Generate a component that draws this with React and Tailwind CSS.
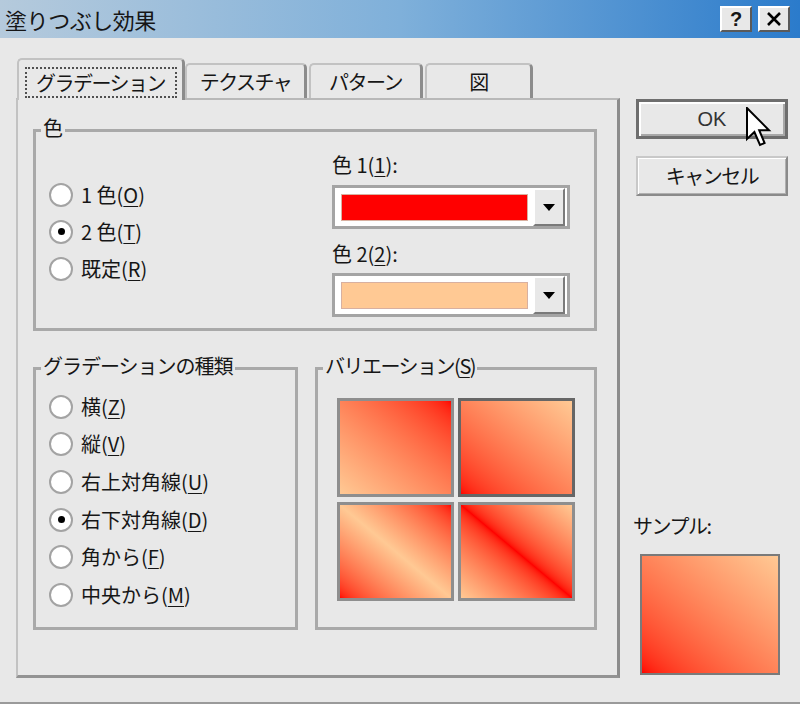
import React from "react";

function U({ children }) {
  return <span className="underline underline-offset-[3px] decoration-1">{children}</span>;
}

function Radio({ checked, children, rowClass }) {
  return (
    <div className={"flex items-center " + rowClass}>
      <span className="w-[24px] h-[24px] rounded-full bg-white border-2 border-[#a3a3a3] flex items-center justify-center shrink-0">
        {checked && <span className="w-[7px] h-[7px] rounded-full bg-black" />}
      </span>
      <span className="ml-[8px] whitespace-nowrap">{children}</span>
    </div>
  );
}

function Dropdown({ swatch }) {
  return (
    <div className="w-[238px] h-[44px] border-[3px] border-[#a4a4a4] bg-white flex items-center pl-[6px] pr-[2px]">
      <div className={"w-[187px] h-[27px] border border-[#d8b0a0] " + swatch} />
      <div className="ml-auto w-[32px] h-[38px] bg-[#e8e8e8] border-2 border-t-white border-l-white border-r-[#7a7a7a] border-b-[#7a7a7a] flex items-center justify-center">
        <svg width="12" height="7" viewBox="0 0 12 7">
          <path d="M0 0 L12 0 L6 7 Z" fill="#000" />
        </svg>
      </div>
    </div>
  );
}

export default function App() {
  return (
    <div className="relative w-[800px] h-[704px] bg-[#e8e8e8] flex flex-col overflow-hidden font-['Noto_Sans_CJK_JP',sans-serif] text-[20px] text-[#161616] leading-none border-b-2 border-[#9a9a9a]">
      {/* Title bar */}
      <div className="h-[38px] shrink-0 flex items-center pl-[5px] pr-[10px] bg-linear-to-r/srgb from-[#b5cadc] via-[#7fb0da] to-[#2b7bcb]">
        <span className="text-[22px] tracking-[-0.5px]">塗りつぶし効果</span>
        <div className="ml-auto flex gap-[6px]">
          <div className="w-[32px] h-[26px] bg-[#e8e8e8] border-2 border-t-white border-l-white border-r-[#5a5a5a] border-b-[#5a5a5a] flex items-center justify-center font-bold text-[20px] font-['Liberation_Sans',sans-serif]">
            ?
          </div>
          <div className="w-[32px] h-[26px] bg-[#e8e8e8] border-2 border-t-white border-l-white border-r-[#5a5a5a] border-b-[#5a5a5a] flex items-center justify-center">
            <svg width="16" height="14" viewBox="0 0 16 14">
              <path d="M2 1 L14 13 M14 1 L2 13" stroke="#000" strokeWidth="2.6" />
            </svg>
          </div>
        </div>
      </div>

      {/* Body */}
      <div className="flex-1 flex pl-[16px] pt-[20px]">
        {/* Left: tab control */}
        <div className="w-[604px] flex flex-col">
          <div className="h-[40px] flex items-end pl-[1px] tracking-[-1.5px]">
            <div className="relative z-10 w-[168px] h-[42px] -mb-[2px] bg-[#e8e8e8] border-l-2 border-t-2 border-r-[3px] border-l-[#c2c2c2] border-t-[#c2c2c2] border-r-[#8c8c8c] rounded-t-[5px] flex justify-center pt-[7px]">
              <div className="w-[152px] h-[31px] border-2 border-dotted border-[#505050] flex items-center justify-center">
                グラデーション
              </div>
            </div>
            <div className="w-[122px] h-[35px] border-l-2 border-t-2 border-r-[3px] border-l-[#c2c2c2] border-t-[#c2c2c2] border-r-[#8c8c8c] rounded-t-[5px] flex items-center justify-center">
              テクスチャ
            </div>
            <div className="ml-[2px] w-[114px] h-[35px] border-l-2 border-t-2 border-r-[3px] border-l-[#c2c2c2] border-t-[#c2c2c2] border-r-[#8c8c8c] rounded-t-[5px] flex items-center justify-center">
              パターン
            </div>
            <div className="ml-[2px] w-[108px] h-[35px] border-l-2 border-t-2 border-r-[3px] border-l-[#c2c2c2] border-t-[#c2c2c2] border-r-[#8c8c8c] rounded-t-[5px] flex items-center justify-center">
              図
            </div>
          </div>

          <div className="w-[604px] h-[580px] border-t-2 border-l-2 border-t-[#b8b8b8] border-l-[#c2c2c2] border-r-[3px] border-b-[3px] border-r-[#8c8c8c] border-b-[#939393] pl-[15px] pt-[16px]">
            {/* Colour group */}
            <fieldset className="w-[564px] h-[215px] border-[3px] border-[#a9a9a9]">
              <legend className="ml-[5px] px-[2px] h-[28px] leading-[24px]">色</legend>
              <div className="flex">
                <div className="w-[296px] pl-[13px] pt-[32px]">
                  <Radio rowClass="h-[37px]">
                    1 色(<U>O</U>)
                  </Radio>
                  <Radio rowClass="h-[37px]" checked>
                    2 色(<U>T</U>)
                  </Radio>
                  <Radio rowClass="h-[37px]">
                    既定(<U>R</U>)
                  </Radio>
                </div>
                <div className="flex flex-col pt-[9px]">
                  <div className="h-[24px] leading-[24px]">
                    色 1(<U>1</U>):
                  </div>
                  <div className="mt-[8px]">
                    <Dropdown swatch="bg-[#ff0000]" />
                  </div>
                  <div className="mt-[13px] h-[24px] leading-[24px]">
                    色 2(<U>2</U>):
                  </div>
                  <div className="mt-[7px]">
                    <Dropdown swatch="bg-[#ffc994]" />
                  </div>
                </div>
              </div>
            </fieldset>

            <div className="flex gap-[17px] mt-[23px]">
              {/* Gradient type */}
              <fieldset className="w-[265px] h-[276px] border-[3px] border-[#a9a9a9]">
                <legend className="ml-[5px] px-[2px] h-[28px] leading-[24px] tracking-[-1px]">グラデーションの種類</legend>
                <div className="pl-[13px] pt-[6px]">
                  <Radio rowClass="h-[37.6px]">
                    横(<U>Z</U>)
                  </Radio>
                  <Radio rowClass="h-[37.6px]">
                    縦(<U>V</U>)
                  </Radio>
                  <Radio rowClass="h-[37.6px]">
                    右上対角線(<U>U</U>)
                  </Radio>
                  <Radio rowClass="h-[37.6px]" checked>
                    右下対角線(<U>D</U>)
                  </Radio>
                  <Radio rowClass="h-[37.6px]">
                    角から(<U>F</U>)
                  </Radio>
                  <Radio rowClass="h-[37.6px]">
                    中央から(<U>M</U>)
                  </Radio>
                </div>
              </fieldset>

              {/* Variations */}
              <fieldset className="w-[282px] h-[276px] border-[3px] border-[#a9a9a9]">
                <legend className="ml-[5px] px-[2px] h-[28px] leading-[24px] tracking-[-1.5px]">
                  バリエーション(<U>S</U>)
                </legend>
                <div className="pl-[19px] pt-[16px]">
                  <div className="grid grid-cols-[117px_117px] grid-rows-[99px_99px] gap-x-[4px] gap-y-[5px]">
                    <div className="border-[3px] border-[#8e8e8e] bg-linear-to-tr from-[#ffc994] to-[#ff0000]" />
                    <div className="border-[3px] border-[#666666] bg-linear-to-tr from-[#ff0000] to-[#ffc994]" />
                    <div className="border-[3px] border-[#8e8e8e] bg-linear-to-tr from-[#ff0000] via-[#ffc994] to-[#ff0000]" />
                    <div className="border-[3px] border-[#8e8e8e] bg-linear-to-tr from-[#ffc994] via-[#ff0000] to-[#ffc994]" />
                  </div>
                </div>
              </fieldset>
            </div>
          </div>
        </div>

        {/* Right column */}
        <div className="ml-[16px] w-[152px] flex flex-col pt-[41px]">
          <div className="h-[40px] border-[3px] border-[#6e6e6e] bg-[#e8e8e8] shadow-[inset_2px_2px_0_#ffffff,inset_-2px_-2px_0_#a8a8a8] flex items-center justify-center font-['Liberation_Sans',sans-serif] text-[20px] text-[#333]">
            OK
          </div>
          <div className="mt-[17px] h-[40px] border-2 border-t-[#c8c8c8] border-l-[#c8c8c8] border-r-[#8a8a8a] border-b-[#8a8a8a] bg-[#e8e8e8] shadow-[inset_1px_1px_0_#ffffff,inset_-1px_-1px_0_#b0b0b0] flex items-center justify-center tracking-[-1.5px]">
            キャンセル
          </div>
          <div className="mt-[318px] -ml-[3px] h-[24px] leading-[24px] tracking-[-1.5px]">サンプル:</div>
          <div className="mt-[16px] ml-[4px] w-[140px] h-[121px] border-2 border-[#7a7a7a] bg-linear-to-tr from-[#ff0000] to-[#ffc994]" />
        </div>
      </div>

      {/* Mouse cursor over OK */}
      <svg className="absolute left-[746px] top-[107px]" width="26" height="40" viewBox="0 0 13 20">
        <path d="M0.5 0.5 L0.5 16 L4.2 12.5 L7 19 L9.3 18 L6.6 11.6 L11.5 11.6 Z" fill="#fff" stroke="#000" strokeWidth="1" strokeLinejoin="miter" />
      </svg>
    </div>
  );
}
